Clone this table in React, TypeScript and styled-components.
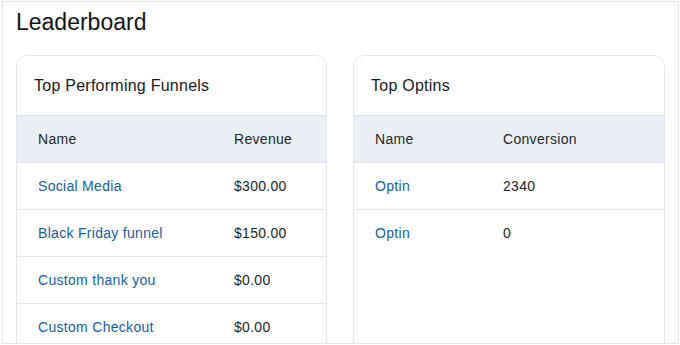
import React from "react";
import styled, { createGlobalStyle } from "styled-components";

interface Column {
    key: string;
    label: string;
    link?: boolean;
}

interface LeaderboardCardProps {
    title: string;
    columns: Column[];
    template: string;
    rows: Record<string, string>[];
}

const GlobalStyle = createGlobalStyle`
  html, body {
    margin: 0;
    padding: 0;
    background: #ffffff;
  }

  body {
    font-family: "Liberation Sans", Arial, sans-serif;
    color: #1d2327;
  }
`;

const Frame = styled.div`
  box-sizing: border-box;
  margin: 1px 2px 0 2px;
  width: 677px;
  height: 343px;
  border: 1px solid #e6e6e6;
  padding: 6px 12px 0 13px;
  overflow: hidden;
  background: #ffffff;
`;

const Title = styled.h1`
  margin: 0;
  font-size: 23px;
  line-height: 28px;
  font-weight: 400;
  color: #111418;
`;

const CardGrid = styled.div`
  display: grid;
  grid-template-columns: 311px 312px;
  gap: 26px;
  margin-top: 19px;
`;

const Card = styled.section`
  border: 1px solid #e4e7ed;
  border-radius: 11px;
  background: #ffffff;
  min-height: 320px;
  overflow: hidden;
`;

const CardHeader = styled.div`
  display: flex;
  align-items: center;
  height: 59px;
  padding-left: 17px;
  font-size: 16px;
  letter-spacing: 0.25px;
  color: #16191d;
`;

const Row = styled.div<{ $template: string; $head?: boolean }>`
  display: grid;
  grid-template-columns: ${({ $template }) => $template};
  align-items: center;
  height: 46px;
  padding-left: 21px;
  font-size: 14px;
  letter-spacing: 0.3px;
  background: ${({ $head }) => ($head ? "#eaf0f5" : "#ffffff")};
  border-top: ${({ $head }) => ($head ? "1px solid #dfe5ec" : "none")};
  border-bottom: 1px solid ${({ $head }) => ($head ? "#dfe4ec" : "#e6e7f0")};

  &:last-child {
    border-bottom: none;
  }
`;

const Cell = styled.span`
  color: #22272c;
  white-space: nowrap;
`;

const LinkCell = styled.a`
  color: #19609f;
  text-decoration: none;
  white-space: nowrap;
`;

const LeaderboardCard: React.FC<LeaderboardCardProps> = ({ title, columns, template, rows }) => (
    <Card>
        <CardHeader>{title}</CardHeader>
        <Row $template={template} $head>
            {columns.map((col) => (
                <Cell key={col.key}>{col.label}</Cell>
            ))}
        </Row>
        {rows.map((row, i) => (
            <Row key={i} $template={template}>
                {columns.map((col) =>
                    col.link ? (
                        <LinkCell key={col.key} href="#">
                            {row[col.key]}
                        </LinkCell>
                    ) : (
                        <Cell key={col.key}>{row[col.key]}</Cell>
                    )
                )}
            </Row>
        ))}
    </Card>
);

const funnels = [
    { name: "Social Media", revenue: "$300.00" },
    { name: "Black Friday funnel", revenue: "$150.00" },
    { name: "Custom thank you", revenue: "$0.00" },
    { name: "Custom Checkout", revenue: "$0.00" },
];

const optins = [
    { name: "Optin", conversion: "2340" },
    { name: "Optin", conversion: "0" },
];

const App: React.FC = () => (
    <>
        <GlobalStyle />
        <Frame>
            <Title>Leaderboard</Title>
            <CardGrid>
                <LeaderboardCard
                    title="Top Performing Funnels"
                    template="196px 1fr"
                    columns={[
                        { key: "name", label: "Name", link: true },
                        { key: "revenue", label: "Revenue" },
                    ]}
                    rows={funnels}
                />
                <LeaderboardCard
                    title="Top Optins"
                    template="128px 1fr"
                    columns={[
                        { key: "name", label: "Name", link: true },
                        { key: "conversion", label: "Conversion" },
                    ]}
                    rows={optins}
                />
            </CardGrid>
        </Frame>
    </>
);

export default App;
